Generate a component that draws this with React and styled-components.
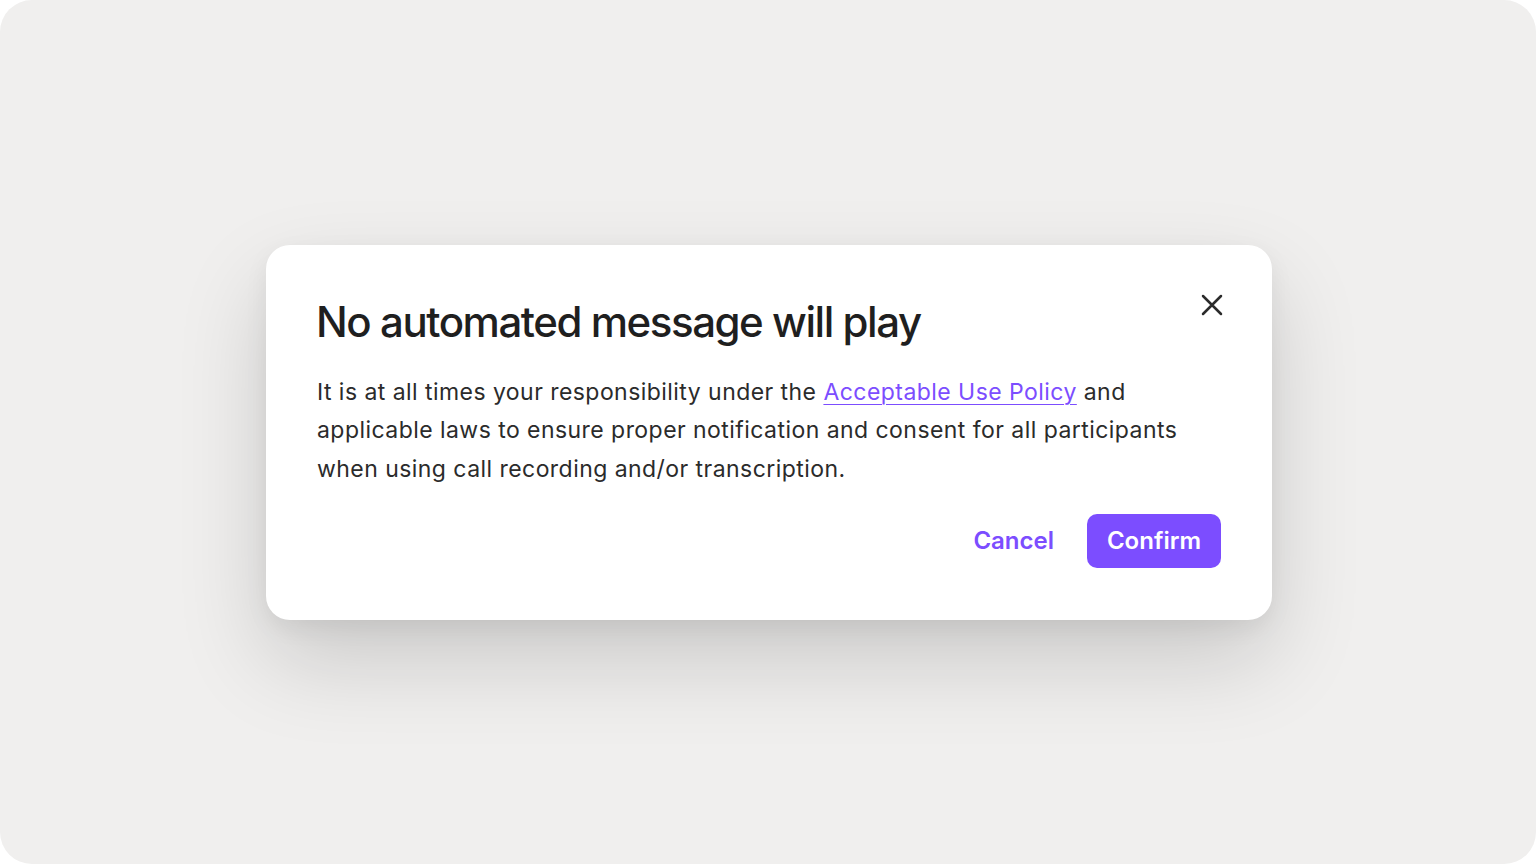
import React from "react";
import styled, { createGlobalStyle } from "styled-components";

const Global = createGlobalStyle`
  html, body { margin: 0; padding: 0; background: #ffffff; }
  body { font-family: Inter, "Noto Sans", sans-serif; -webkit-font-smoothing: antialiased; }
`;

const Page = styled.div`
  width: 1536px;
  height: 864px;
  border-radius: 32px;
  background: #f0efee;
  display: flex;
  align-items: center;
  justify-content: center;
  overflow: hidden;
`;

const Dialog = styled.div`
  position: relative;
  width: 1006px;
  height: 375px;
  margin-left: 2px;
  box-sizing: border-box;
  background: #ffffff;
  border-radius: 24px;
  padding: 49px 51px 52px 51px;
  box-shadow: 0 40px 90px rgba(0, 0, 0, 0.16), 0 8px 24px rgba(0, 0, 0, 0.06);
  display: flex;
  flex-direction: column;
`;

const Title = styled.h1`
  margin: 0 0 0 -1px;
  font-size: 42px;
  font-weight: 500;
  letter-spacing: -1.45px;
  line-height: 56px;
  color: #1f1f1f;
`;

const Body = styled.p`
  margin: 23px 0 0 0;
  font-size: 23px;
  line-height: 38.5px;
  color: #2b2b2b;
  letter-spacing: 0.45px;
`;

const Link = styled.a`
  color: #7c4dff;
  text-decoration: underline;
  text-underline-offset: 4px;
  text-decoration-thickness: 1px;
`;

const Actions = styled.div`
  margin-top: auto;
  display: flex;
  justify-content: flex-end;
  align-items: center;
  gap: 33px;
`;

const TextButton = styled.button`
  border: none;
  background: none;
  padding: 0;
  font-family: inherit;
  font-size: 24px;
  font-weight: 600;
  color: #7c4dff;
`;

const PrimaryButton = styled.button`
  border: none;
  background: #7c4dff;
  color: #ffffff;
  font-family: inherit;
  font-size: 24px;
  font-weight: 600;
  height: 54px;
  width: 134px;
  border-radius: 10px;
`;

const Close = styled.button`
  position: absolute;
  top: 46px;
  right: 46px;
  width: 28px;
  height: 28px;
  border: none;
  background: none;
  padding: 0;
  display: flex;
  align-items: center;
  justify-content: center;
  color: #2b2b2b;
`;

export default function App() {
  return (
    <>
      <Global />
      <Page>
        <Dialog>
          <Close aria-label="Close">
            <svg width="22" height="22" viewBox="0 0 22 22" fill="none">
              <path d="M2 2L20 20M20 2L2 20" stroke="currentColor" strokeWidth="2.5" strokeLinecap="round" />
            </svg>
          </Close>
          <Title>No automated message will play</Title>
          <Body>
            It is at all times your responsibility under the{" "}
            <Link href="#">Acceptable Use Policy</Link> and applicable laws to ensure proper
            notification and consent for all participants when using call recording and/or
            transcription.
          </Body>
          <Actions>
            <TextButton>Cancel</TextButton>
            <PrimaryButton>Confirm</PrimaryButton>
          </Actions>
        </Dialog>
      </Page>
    </>
  );
}
